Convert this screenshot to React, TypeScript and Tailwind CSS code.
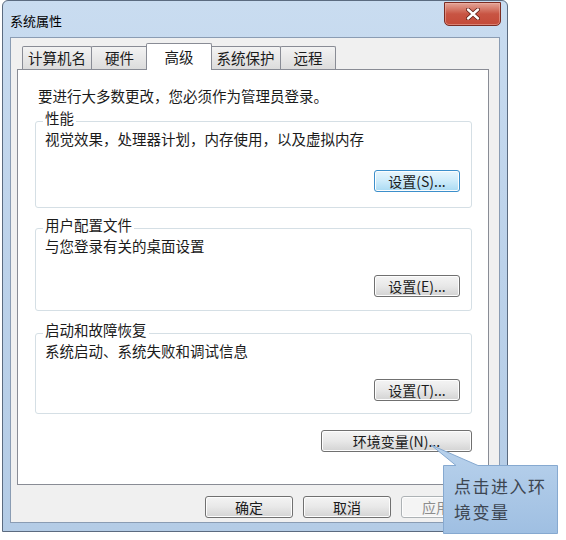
import React from "react";

const tabs = [
  { label: "计算机名", w: "w-[70px]", cls: "" },
  { label: "硬件", w: "w-[57px]", cls: "-ml-px" },
  { label: "高级", w: "w-[66px]", cls: "-mx-[2px]", active: true },
  { label: "系统保护", w: "w-[71px]", cls: "" },
  { label: "远程", w: "w-[56px]", cls: "-ml-px" },
];

function Button({
  label,
  w,
  primary,
  disabled,
}: {
  label: string;
  w: string;
  primary?: boolean;
  disabled?: boolean;
}) {
  let look =
    "border-[#707070] bg-linear-to-b from-[#f4f4f4] via-[#e8e8e8] to-[#d3d3d3] text-[#1b1b1b]";
  if (primary)
    look =
      "border-[#3c8fcb] bg-linear-to-b from-[#e8f6fd] via-[#cdebfa] to-[#a9daf3] text-[#1b1b1b]";
  if (disabled) look = "border-[#adb2b5] bg-[#f4f4f4] text-[#8d8d8d]";
  return (
    <div
      className={`${w} ${look} flex h-[22px] items-center justify-center rounded-[3px] border text-[14px] leading-[20px] shadow-[inset_0_0_0_1px_#fdfdfd]`}
    >
      {label}
    </div>
  );
}

function Group({
  title,
  desc,
  btn,
  primary,
  cls,
  btnGap,
}: {
  title: string;
  desc: string;
  btn: string;
  primary?: boolean;
  cls: string;
  btnGap: string;
}) {
  return (
    <div
      className={`${cls} ml-[17px] mr-[16px] flex flex-col rounded-[3px] border border-[#d5dfe5]`}
    >
      <div className="-mt-[14px] ml-[7px] w-fit bg-white px-[2px] leading-[20px]">
        {title}
      </div>
      <div className="mt-[1px] pl-[9px] leading-[20px]">{desc}</div>
      <div className={`${btnGap} mr-[11px] flex justify-end`}>
        <Button label={btn} w="w-[86px]" primary={primary} />
      </div>
    </div>
  );
}

export default function App() {
  return (
    <div className="relative h-[540px] w-[566px] overflow-hidden bg-white font-['Noto_Sans_CJK_SC',sans-serif] text-[14.5px] text-[#1b1b1b]">
      {/* window frame */}
      <div className="ml-[2px] flex h-[532px] w-[506px] flex-col rounded-t-[6px] border border-[#5b6b80] bg-linear-to-b from-[#c9dcf0] via-[#bcd2ea] to-[#b4cce6] px-[7px] pb-[8px]">
        <div className="flex h-[36px] items-start justify-between">
          <div className="pt-[10px] text-[13px] leading-[20px] text-black">
            系统属性
          </div>
          <div className="-mr-px mt-[1px] flex h-[24px] w-[57px] items-center justify-center rounded-b-[5px] border border-[#7b2c22] bg-linear-to-b from-[#e3a497] via-[#c85443] to-[#c44a38] shadow-[inset_0_0_0_1px_#f0b8ae80]">
            <svg width="14" height="12" viewBox="0 0 14 12">
              <path
                d="M2 1.5 L12 10.5 M12 1.5 L2 10.5"
                stroke="#5a1a12"
                strokeWidth="4"
                strokeLinecap="round"
              />
              <path
                d="M2 1.5 L12 10.5 M12 1.5 L2 10.5"
                stroke="#ffffff"
                strokeWidth="2.4"
                strokeLinecap="round"
              />
            </svg>
          </div>
        </div>

        {/* client area */}
        <div className="flex flex-1 flex-col border border-[#8a9cb3] bg-[#f0f0f0] pl-[6px] pr-[10px] pt-[5px]">
          <div className="flex items-end pl-[5px]">
            {tabs.map((t) =>
              t.active ? (
                <div
                  key={t.label}
                  className={`${t.w} ${t.cls} relative z-10 -mb-px h-[27px] rounded-t-[2px] border border-b-0 border-[#898c95] bg-white pt-[3px] text-center leading-[20px]`}
                >
                  {t.label}
                </div>
              ) : (
                <div
                  key={t.label}
                  className={`${t.w} ${t.cls} h-[23px] rounded-t-[2px] border border-b-0 border-[#898c95] bg-linear-to-b from-[#f3f3f3] to-[#dcdcdc] pt-[1px] text-center leading-[20px]`}
                >
                  {t.label}
                </div>
              )
            )}
          </div>

          <div className="flex h-[416px] flex-col border border-[#898c95] bg-white">
            <div className="pl-[20px] pt-[16px] leading-[20px]">
              要进行大多数更改，您必须作为管理员登录。
            </div>
            <Group
              cls="mt-[15px] h-[87px]"
              btnGap="mt-[21px]"
              title="性能"
              desc="视觉效果，处理器计划，内存使用，以及虚拟内存"
              btn="设置(S)..."
              primary
            />
            <Group
              cls="mt-[20px] h-[83px]"
              btnGap="mt-[19px]"
              title="用户配置文件"
              desc="与您登录有关的桌面设置"
              btn="设置(E)..."
            />
            <Group
              cls="mt-[22px] h-[81px]"
              btnGap="mt-[18px]"
              title="启动和故障恢复"
              desc="系统启动、系统失败和调试信息"
              btn="设置(T)..."
            />
            <div className="mr-[16px] mt-[16px] flex justify-end">
              <Button label="环境变量(N)..." w="w-[151px]" />
            </div>
          </div>

          <div className="mt-[11px] flex justify-end gap-[10px]">
            <Button label="确定" w="w-[88px]" />
            <Button label="取消" w="w-[88px]" />
            <Button label="应用(A)" w="w-[88px]" disabled />
          </div>
        </div>
      </div>

      {/* callout */}
      <div className="absolute left-[426px] top-[440px] h-[96px] w-[134px]">
        <svg width="134" height="96" className="absolute left-0 top-0">
          <defs>
            <linearGradient id="cg" x1="0" y1="0" x2="0" y2="1">
              <stop offset="0" stopColor="#b9d2ec" />
              <stop offset="1" stopColor="#9fbfe2" />
            </linearGradient>
          </defs>
          <path
            d="M17.5 25.5 L30 25.5 L5 5 L52 25.5 L131.5 25.5 L131.5 93.5 L17.5 93.5 Z"
            fill="url(#cg)"
            stroke="#86a9d0"
            strokeWidth="1"
          />
        </svg>
        <div className="absolute left-[28px] top-[33px] w-[100px] font-['Noto_Sans_CJK_SC',serif] text-[17px] leading-[26px] tracking-[1.5px] text-[#3d4652]">
          点击进入环境变量
        </div>
      </div>
    </div>
  );
}
